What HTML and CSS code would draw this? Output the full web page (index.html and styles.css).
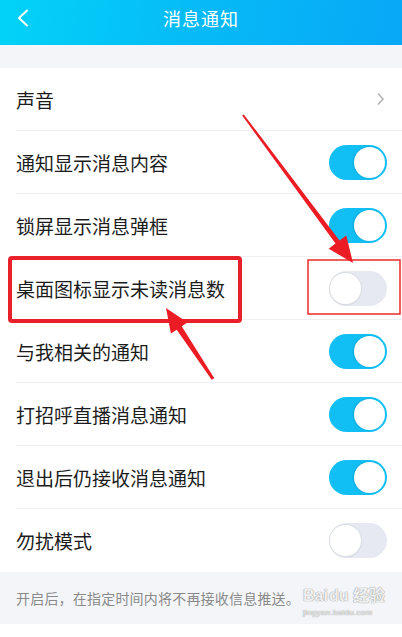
FILE: index.html
```html
<!DOCTYPE html>
<html lang="zh-CN">
<head>
    <meta charset="UTF-8">
    <meta name="viewport" content="width=device-width, initial-scale=1.0">
    <title>消息通知</title>
    <link rel="stylesheet" href="styles.css">
</head>
<body>
<div class="page">
    <div class="topbar">
        <svg class="back" width="14" height="18" viewBox="0 0 14 18"><path d="M11 1.5 L3 9 L11 16.5" fill="none" stroke="#fff" stroke-width="2" stroke-linecap="round" stroke-linejoin="round"/></svg>
        <div class="title">消息通知</div>
    </div>
    <div class="gap"></div>

    <ul class="settings">
        <li class="row"><span>声音</span>
            <svg class="more" width="9" height="14" viewBox="0 0 9 14"><path d="M2 1.5 L7 7 L2 12.5" fill="none" stroke="#b4b4b4" stroke-width="1.6"/></svg>
        </li>
        <li class="row"><span>通知显示消息内容</span><div class="switch on"></div></li>
        <li class="row"><span>锁屏显示消息弹框</span><div class="switch on"></div></li>
        <li class="row"><span>桌面图标显示未读消息数</span><div class="switch"></div></li>
        <li class="row"><span>与我相关的通知</span><div class="switch on"></div></li>
        <li class="row"><span>打招呼直播消息通知</span><div class="switch on"></div></li>
        <li class="row"><span>退出后仍接收消息通知</span><div class="switch on"></div></li>
        <li class="row last"><span>勿扰模式</span><div class="switch"></div></li>
    </ul>

    <div class="hint">开启后，在指定时间内将不再接收信息推送。</div>

    <div class="watermark">
        <div class="wm-logo">Bai<span class="paw">du</span> 经验</div>
        <div class="wm-url">jingyan.baidu.com</div>
    </div>

    <!-- annotations drawn over the screenshot -->
    <svg class="marks" width="402" height="637" viewBox="0 0 402 637">
        <rect x="10" y="258" width="230" height="63" rx="2" fill="none" stroke="#e8202a" stroke-width="4"/>
        <rect x="308" y="260" width="92" height="54" fill="none" stroke="#ec2a2a" stroke-width="1.5"/>
        <polygon fill="#ec1c24" points="242.2,115.6 335.5,243.6 328.7,248.7 353,263 346.3,235.5 339.5,240.6 243.8,114.4"/>
        <polygon fill="#ec1c24" points="214.3,378.2 181.7,326.3 187.5,322.5 166,308 170.9,333.5 176.7,329.7 211.7,379.8"/>
    </svg>
</div>
</body>
</html>
```

FILE: styles.css
```css
body {
    margin: 0;
    padding: 0;
    font-family: "Noto Sans CJK SC", "Noto Sans", sans-serif;
    background-color: #fff;
}

.page {
    position: relative;
    width: 402px;
    height: 637px;
    overflow: hidden;
}

.topbar {
    height: 45px;
    display: flex;
    align-items: center;
    justify-content: center;
    position: relative;
    background: linear-gradient(100deg, #02d3f8 0%, #06bcf7 45%, #08a8f6 100%);
}

.back {
    position: absolute;
    left: 16px;
    top: 9px;
}

.title {
    color: #fff;
    font-size: 18px;
    margin-top: -9px;
    letter-spacing: 1px;
}

.gap {
    height: 23px;
    background-color: #f3f5f8;
}

.settings {
    list-style: none;
    margin: 0;
    padding: 0 0 0 16px;
}

.row {
    height: 62px;
    display: flex;
    align-items: center;
    justify-content: space-between;
    border-bottom: 1px solid #eef0f3;
    padding-right: 15px;
    font-size: 19px;
    color: #1c1c1c;
}

.row.last {
    border-bottom: none;
    height: 63px;
}

.more {
    margin-right: 2px;
}

.switch {
    width: 58px;
    height: 35px;
    border-radius: 18px;
    background-color: #e6e9f1;
    position: relative;
    box-sizing: border-box;
}

.switch::after {
    content: "";
    position: absolute;
    top: 2px;
    left: 1px;
    width: 31px;
    height: 31px;
    border-radius: 50%;
    background-color: #fff;
    box-shadow: 0 0 0 1px #dcdfe5, 0 1px 2px rgba(0, 0, 0, 0.12);
}

.switch.on {
    background-color: #12bff5;
}

.switch.on::after {
    left: 25px;
    box-shadow: -1px 0 2px rgba(0, 0, 0, 0.15);
}

.hint {
    height: 52px;
    background-color: #f3f5f8;
    color: #8a8a8a;
    font-size: 14px;
    letter-spacing: 0.2px;
    padding-left: 16px;
    display: flex;
    align-items: center;
}

.watermark {
    position: absolute;
    left: 303px;
    top: 585px;
    color: rgba(255, 255, 255, 0.85);
    font-family: "Liberation Sans", "Noto Sans CJK SC", sans-serif;
    text-shadow: 0 0 1px #9a9a9a, 0 0 1px #9a9a9a;
}

.wm-logo {
    font-size: 16px;
    font-weight: bold;
    line-height: 22px;
}

.paw {
    margin-left: 1px;
}

.wm-url {
    font-size: 8px;
    line-height: 11px;
    letter-spacing: 0.3px;
}

.marks {
    position: absolute;
    left: 0;
    top: 0;
    pointer-events: none;
}
```
